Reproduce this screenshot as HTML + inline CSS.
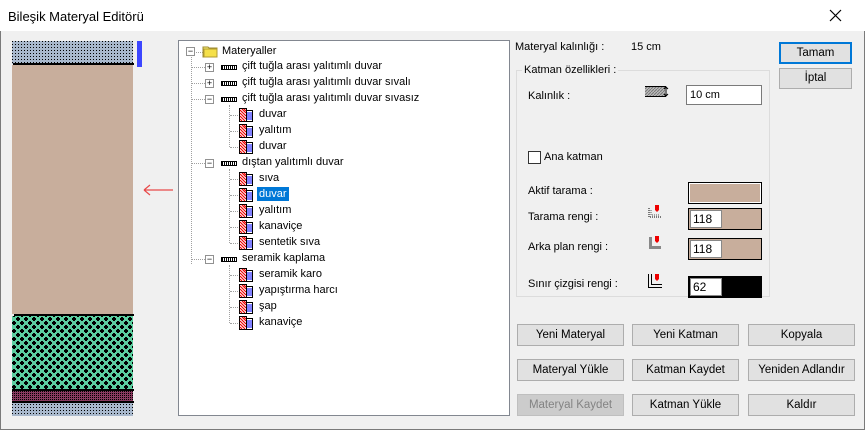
<!DOCTYPE html>
<html><head><meta charset="utf-8"><style>
*{margin:0;padding:0;box-sizing:border-box}
body{width:865px;height:430px;background:#f0f0f0;font-family:"Liberation Sans",sans-serif;font-size:11px;color:#000;position:relative;overflow:hidden}
.win{position:absolute;left:0;top:0;width:865px;height:430px;border:1px solid #7a7a7a;border-top:none}
.title{position:absolute;left:0;top:0;width:865px;height:31px;background:#fff}
.a{position:absolute;white-space:nowrap}
.btn{position:absolute;background:#e1e1e1;border:1px solid #adadad;text-align:center;line-height:20px;font-size:11.5px}
.tree{position:absolute;left:178px;top:40px;width:332px;height:376px;background:#fff;border:1px solid #828790;overflow:hidden}
.box{position:absolute;width:9px;height:9px;border:1px solid #919191;background:#fff;font-size:9px;line-height:7px;text-align:center;color:#000}
.dv{position:absolute;border-left:1px dotted #a0a0a0}
.dh{position:absolute;border-top:1px dotted #a0a0a0}
.bar{position:absolute;width:16px;height:5px;background:repeating-linear-gradient(90deg,#000 0 1px,#fff 1px 2px);border:1px solid #000}
.inp{position:absolute;background:#fff;border:1px solid #7a7a7a;padding-left:3px;line-height:18px}
</style></head><body>
<div class="win"></div>
<div class="title"></div>
<div class="a" style="left:8px;top:9px;font-size:13px">Bileşik Materyal Editörü</div>
<svg class="a" style="left:829px;top:9px" width="13" height="13"><path d="M1 1L12 12M12 1L1 12" stroke="#000" stroke-width="1.2"/></svg>

<svg class="a" style="left:12px;top:41px" width="122" height="375">
<defs>
<pattern id="p1" width="3" height="3" patternUnits="userSpaceOnUse"><rect width="3" height="3" fill="#a8b8cc"/><rect width="1" height="1" fill="#000"/></pattern>
<pattern id="p2" width="8" height="8" patternUnits="userSpaceOnUse"><rect width="8" height="8" fill="#5ccfa0"/><path d="M1 0h2v1h1v2h-1v1h-2v-1h-1v-2h1z" fill="#000"/><path d="M5 4h2v1h1v2h-1v1h-2v-1h-1v-2h1z" fill="#000"/></pattern>
<pattern id="p3" width="2" height="2" patternUnits="userSpaceOnUse"><rect width="2" height="2" fill="#8a3a60"/><rect width="1" height="1" fill="#000"/></pattern>
</defs>
<rect x="0" y="0" width="121" height="23" fill="url(#p1)"/>
<rect x="1" y="22" width="121" height="2" fill="#000"/>
<rect x="0" y="24" width="121" height="249" fill="#c8ae9c"/>
<rect x="2" y="273" width="120" height="2" fill="#000"/>
<rect x="0" y="275" width="121" height="74" fill="url(#p2)"/>
<rect x="0" y="348" width="122" height="2" fill="#000"/>
<rect x="0" y="350" width="121" height="10" fill="url(#p3)"/>
<rect x="0" y="360" width="122" height="2" fill="#000"/>
<rect x="0" y="362" width="121" height="13" fill="url(#p1)"/>
</svg>
<div class="a" style="left:137px;top:41px;width:5px;height:26px;background:#3c46ff"></div>
<svg class="a" style="left:142px;top:184px" width="32" height="12"><path d="M2 6H31M2 6L8 1M2 6L8 11" stroke="#e84a4a" stroke-width="1.2" fill="none"/></svg>

<div class="tree">
<svg width="0" height="0" style="position:absolute"><defs>
<g id="li"><rect x="0.5" y="0.5" width="7" height="13" fill="#fff" stroke="#000"/><path d="M1 2l6 6M1 5l6 6M1 8l5 5M1 11l2 2M3 1l4 4M5 1l2 2" stroke="#e00" stroke-width="1.2"/><rect x="7.5" y="2.5" width="6" height="11" fill="#fff" stroke="#000"/><path d="M8 5h5M8 7h5M8 9h5M8 11h5" stroke="#00f"/></g>
</defs></svg>
<div class="dv" style="left:12px;top:16px;height:207px"></div>
<div class="dh" style="left:17px;top:11px;width:7px"></div>
<div class="box" style="left:7px;top:6px">−</div>
<svg class="a" style="left:23px;top:3px" width="17" height="14"><path d="M1 3h5l1 1h8v9H1z" fill="#fdf27a" stroke="#9c8a30"/><rect x="2" y="5" width="13" height="8" fill="#f5e04a" stroke="#b09a30"/></svg>
<div class="a" style="left:43px;top:4px">Materyaller</div>
</div>
<script>
var T=document.querySelector('.tree');var h='';
var L1=[[26,'+','çift tuğla arası yalıtımlı duvar'],[42,'+','çift tuğla arası yalıtımlı duvar sıvalı'],[58,'−','çift tuğla arası yalıtımlı duvar sıvasız'],[122,'−','dıştan yalıtımlı duvar'],[218,'−','seramik kaplama']];
L1.forEach(function(r){var y=r[0];h+='<div class="dh" style="left:12px;top:'+y+'px;width:14px"></div><div class="box" style="left:26px;top:'+(y-4)+'px">'+r[1]+'</div><div class="bar" style="left:42px;top:'+(y-2)+'px"></div><div class="a" style="left:63px;top:'+(y-7)+'px">'+r[2]+'</div>';});
var L2=[[74,'duvar'],[90,'yalıtım'],[106,'duvar'],[138,'sıva'],[154,'duvar',1],[170,'yalıtım'],[186,'kanaviçe'],[202,'sentetik sıva'],[234,'seramik karo'],[250,'yapıştırma harcı'],[266,'şap'],[282,'kanaviçe']];
h+='<div class="dv" style="left:50px;top:64px;height:42px"></div><div class="dv" style="left:50px;top:128px;height:74px"></div><div class="dv" style="left:50px;top:224px;height:58px"></div>';
L2.forEach(function(r){var y=r[0];h+='<div class="dh" style="left:51px;top:'+y+'px;width:10px"></div><svg class="a" style="left:60px;top:'+(y-7)+'px" width="15" height="15"><use href="#li"/></svg><div class="a" style="left:80px;top:'+(y-7)+'px;'+(r[2]?'background:#0078d7;color:#fff;padding:1px 2px;left:78px;top:'+(y-8)+'px':'')+'">'+r[1]+'</div>';});
T.insertAdjacentHTML('beforeend',h);
</script>

<div class="a" style="left:515px;top:41px">Materyal kalınlığı :</div>
<div class="a" style="left:631px;top:41px">15 cm</div>
<div class="a" style="left:516px;top:70px;width:254px;height:227px;border:1px solid #dcdcdc"></div>
<div class="a" style="left:522px;top:64px;background:#f0f0f0;padding:0 2px">Katman özellikleri :</div>
<div class="a" style="left:528px;top:90px">Kalınlık :</div>
<svg class="a" style="left:645px;top:86px" width="24" height="12"><defs><pattern id="hh" width="3" height="3" patternUnits="userSpaceOnUse"><rect width="3" height="3" fill="#bbb"/><path d="M0 3L3 0" stroke="#777"/></pattern></defs><rect x="0" y="1" width="20" height="9" fill="url(#hh)"/><path d="M0 0.5h21M0 10.5h21M21 1v9M19 3l2-2 2 2M19 8l2 2 2-2" stroke="#000" fill="none"/></svg>
<div class="inp" style="left:686px;top:85px;width:76px;height:20px">10 cm</div>
<div class="a" style="left:528px;top:151px;width:13px;height:13px;border:1px solid #333;background:#fff"></div>
<div class="a" style="left:544px;top:151px">Ana katman</div>
<div class="a" style="left:528px;top:185px">Aktif tarama :</div>
<div class="a" style="left:688px;top:182px;width:74px;height:22px;border:1px solid #000;box-shadow:inset 0 0 0 1px #fff;background:#c8ae9c"></div>
<div class="a" style="left:528px;top:211px">Tarama rengi :</div>
<svg class="a" style="left:647px;top:204px" width="16" height="16"><path d="M2 4v9h12" stroke="#000" stroke-dasharray="1 1" fill="none"/><path d="M4 6v5h9" stroke="#555" stroke-dasharray="1 1" fill="none"/><path d="M8 1h4v5l-2 2-2-2z" fill="#e00"/></svg>
<div class="a" style="left:688px;top:208px;width:74px;height:22px;border:1px solid #000;background:#c8ae9c"><div style="position:absolute;left:1px;top:1px;width:32px;height:18px;background:#fff;border:1px solid #888;line-height:16px;padding-left:2px;font-size:12px">118</div></div>
<div class="a" style="left:528px;top:241px">Arka plan rengi :</div>
<svg class="a" style="left:647px;top:235px" width="16" height="16"><path d="M2 2v12h12v-3H5V2z" fill="#888"/><path d="M8 1h4v5l-2 2-2-2z" fill="#e00"/></svg>
<div class="a" style="left:688px;top:238px;width:74px;height:22px;border:1px solid #000;background:#c8ae9c"><div style="position:absolute;left:1px;top:1px;width:32px;height:18px;background:#fff;border:1px solid #888;line-height:16px;padding-left:2px;font-size:12px">118</div></div>
<div class="a" style="left:528px;top:278px">Sınır çizgisi rengi :</div>
<svg class="a" style="left:647px;top:273px" width="16" height="16"><path d="M1.5 1v13.5H15M4.5 1v10.5H15" stroke="#000" fill="none"/><path d="M8 1h4v5l-2 2-2-2z" fill="#e00"/></svg>
<div class="a" style="left:688px;top:276px;width:74px;height:22px;border:1px solid #000;background:#000"><div style="position:absolute;left:1px;top:1px;width:32px;height:18px;background:#fff;border:1px solid #888;line-height:16px;padding-left:2px;font-size:12px">62</div></div>

<div class="btn" style="left:779px;top:42px;width:73px;height:22px;border:2px solid #0078d7;line-height:18px">Tamam</div>
<div class="btn" style="left:779px;top:68px;width:73px;height:21px;line-height:19px">İptal</div>

<div class="btn" style="left:517px;top:324px;width:107px;height:22px">Yeni Materyal</div>
<div class="btn" style="left:632px;top:324px;width:107px;height:22px">Yeni Katman</div>
<div class="btn" style="left:748px;top:324px;width:107px;height:22px">Kopyala</div>
<div class="btn" style="left:517px;top:359px;width:107px;height:22px">Materyal Yükle</div>
<div class="btn" style="left:632px;top:359px;width:107px;height:22px">Katman Kaydet</div>
<div class="btn" style="left:748px;top:359px;width:107px;height:22px">Yeniden Adlandır</div>
<div class="btn" style="left:517px;top:394px;width:107px;height:22px;background:#ccc;border-color:#bfbfbf;color:#838383">Materyal Kaydet</div>
<div class="btn" style="left:632px;top:394px;width:107px;height:22px">Katman Yükle</div>
<div class="btn" style="left:748px;top:394px;width:107px;height:22px">Kaldır</div>
</body></html>
